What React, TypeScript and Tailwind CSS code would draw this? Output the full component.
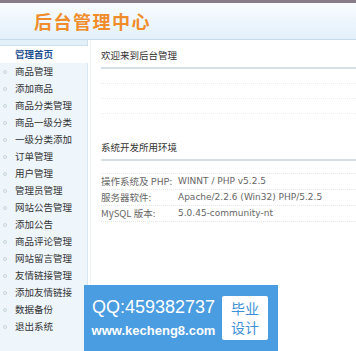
const menu = [
  "商品管理",
  "添加商品",
  "商品分类管理",
  "商品一级分类",
  "一级分类添加",
  "订单管理",
  "用户管理",
  "管理员管理",
  "网站公告管理",
  "添加公告",
  "商品评论管理",
  "网站留言管理",
  "友情链接管理",
  "添加友情链接",
  "数据备份",
  "退出系统",
];

const env = [
  ["操作系统及 PHP:", "WINNT / PHP v5.2.5"],
  ["服务器软件:", "Apache/2.2.6 (Win32) PHP/5.2.5"],
  ["MySQL 版本:", "5.0.45-community-nt"],
];

const cjk = "font-['Noto_Sans_CJK_SC',sans-serif]";

export default function App() {
  return (
    <div className={`relative w-[356px] h-[351px] overflow-hidden bg-white ${cjk}`}>
      <div className="h-[3px] bg-[#877c88]" />
      <div className="h-[37px] bg-gradient-to-b from-[#f8fcff] to-[#e3f0fa] border-b border-[#c6d9e8] flex items-center pl-[34px]">
        <h1 className="text-[18px] leading-none font-bold tracking-[1.5px] text-[#f08c2a]">后台管理中心</h1>
      </div>

      <div className="flex">
        {/* sidebar */}
        <div className="w-[88px] shrink-0">
          <div className="h-[6px] bg-[#e4f0f9] border-b border-r border-[#cfe0ec]" />
          <div className="h-[17px] flex items-center pl-[15px] text-[9.5px] font-bold text-[#1e4f8f] leading-none">
            管理首页
          </div>
          <ul className="bg-[#eef6fb] border-r border-[#d9e7f1] pb-[20px]">
            {menu.map((m) => (
              <li key={m} className="h-[17px] flex items-center text-[9.5px] leading-none text-[#333]">
                <span className="w-[4px] h-[4px] rounded-full border border-[#c8d4dc] ml-[3px] mr-[8px]" />
                {m}
              </li>
            ))}
          </ul>
        </div>

        {/* main */}
        <div className="flex-1 pl-[10px] pt-[8px] ml-[2px] border-l border-[#eef3f7]">
          <div className="text-[9.5px] leading-[14px] text-[#333] pb-[5px] border-b-2 border-[#d5dfe6]">欢迎来到后台管理</div>
          <div className="h-[15px] border-b border-dotted border-[#eceff1]" />
          <div className="h-[15px] border-b border-dotted border-[#eceff1]" />
          <div className="h-[15px] border-b border-dotted border-[#eceff1]" />

          <div className="mt-[26px] text-[9.5px] leading-[14px] text-[#333] pb-[5px] border-b-2 border-[#d5dfe6]">系统开发所用环境</div>
          <div className="h-[13px] border-b border-dotted border-[#e6e9eb]" />
          {env.map(([k, v]) => (
            <div key={k} className="h-[16px] flex items-center border-b border-dotted border-[#e6e9eb] text-[9.5px] text-[#666] leading-none">
              <span className="w-[77px] shrink-0 whitespace-nowrap">{k}</span>
              <span className="font-['DejaVu_Sans',sans-serif] text-[9px]">{v}</span>
            </div>
          ))}
        </div>
      </div>

      {/* watermark overlay */}
      <div className="absolute left-[84px] top-[285px] w-[194px] h-[66px] bg-[#4a9de0] flex items-center pl-[3px]">
        <div className="w-[133px] flex flex-col items-center text-white font-['Liberation_Sans',sans-serif]">
          <span className="text-[18px] leading-[20px]">QQ:459382737</span>
          <span className="text-[13px] leading-[16px] font-bold mt-[6px]">www.kecheng8.com</span>
        </div>
        <div className="ml-[2px] w-[46px] h-[44px] bg-white rounded-[2px] flex flex-col items-center justify-center text-[#3e8fd6] text-[14px] leading-[19px]">
          <span>毕业</span>
          <span>设计</span>
        </div>
      </div>
    </div>
  );
}
